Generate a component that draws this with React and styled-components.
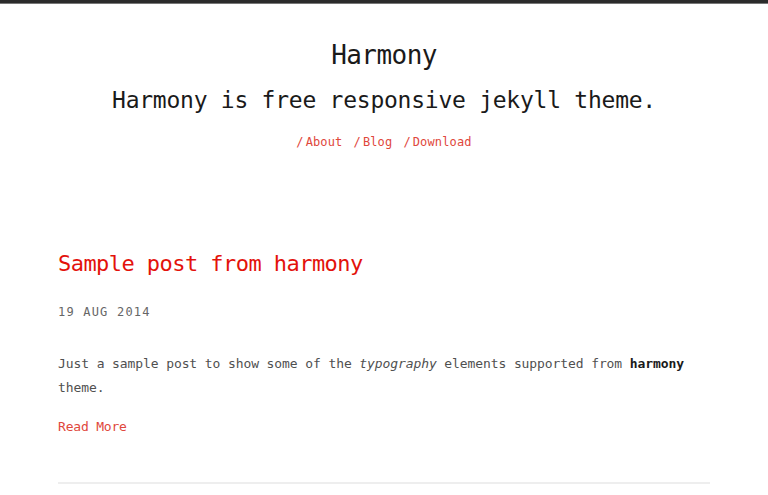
import React from 'react';
import styled, { createGlobalStyle } from 'styled-components';

const GlobalStyle = createGlobalStyle`
    html, body {
        margin: 0;
        padding: 0;
        background: #fff;
    }
    body {
        border-top: 3px solid #2b2b2b;
        box-shadow: inset 0 1px 0 #777;
        font-family: "DejaVu Sans Mono", "Liberation Mono", monospace;
    }
`;

const Header = styled.header`
    padding-top: 32px;
    text-align: center;
`;

const SiteTitle = styled.h1`
    margin: 0;
    font-size: 26px;
    font-weight: normal;
    line-height: 40px;
    letter-spacing: -0.55px;
    color: #1a1a1a;
`;

const Tagline = styled.h2`
    margin: 7px 0 0;
    font-size: 23px;
    font-weight: normal;
    line-height: 36px;
    letter-spacing: -0.25px;
    color: #1a1a1a;
`;

const Nav = styled.nav`
    margin-top: 14px;
    display: flex;
    justify-content: center;
    gap: 11px;
    line-height: 20px;
`;

const NavLink = styled.a`
    font-size: 12px;
    letter-spacing: 0.15px;
    color: #e0473c;
    text-decoration: none;

    span {
        margin-right: 2px;
    }
`;

const Main = styled.main`
    max-width: 652px;
    margin: 96px auto 0;
`;

const PostTitle = styled.h2`
    margin: 0;
    font-size: 22px;
    font-weight: normal;
    line-height: 32px;
    letter-spacing: -0.55px;
    color: #e3120b;
`;

const PostDate = styled.div`
    margin-top: 23px;
    font-size: 12px;
    line-height: 18px;
    letter-spacing: 1.2px;
    color: #666;
`;

const Excerpt = styled.p`
    margin: 31px 0 0;
    font-size: 13px;
    line-height: 24px;
    letter-spacing: -0.1px;
    color: #505050;

    strong {
        color: #1a1a1a;
    }
`;

const ReadMore = styled.a`
    display: block;
    margin-top: 17px;
    font-size: 13px;
    line-height: 20px;
    letter-spacing: -0.2px;
    color: #e0473c;
    text-decoration: none;
`;

const Divider = styled.hr`
    margin: 45px 0 0;
    border: 0;
    height: 2px;
    background: #eeeeee;
`;

const links = ['About', 'Blog', 'Download'];

const App = () => {
    return (
        <>
            <GlobalStyle />
            <Header>
                <SiteTitle>Harmony</SiteTitle>
                <Tagline>Harmony is free responsive jekyll theme.</Tagline>
                <Nav>
                    {links.map(link => (
                        <NavLink key={link} href="#"><span>/</span>{link}</NavLink>
                    ))}
                </Nav>
            </Header>
            <Main>
                <PostTitle>Sample post from harmony</PostTitle>
                <PostDate>19 AUG 2014</PostDate>
                <Excerpt>
                    Just a sample post to show some of the <em>typography</em> elements supported from <strong>harmony</strong> theme.
                </Excerpt>
                <ReadMore href="#">Read More</ReadMore>
                <Divider />
            </Main>
        </>
    );
};

export default App;
